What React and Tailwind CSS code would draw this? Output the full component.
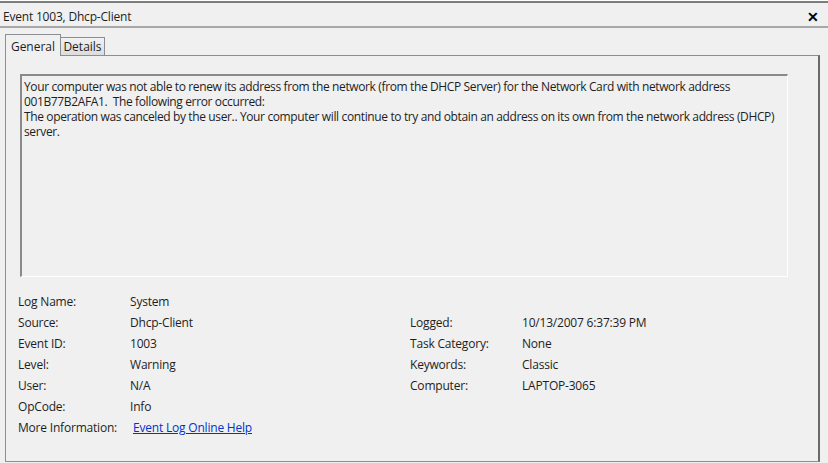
import React from "react";

const left = [
  ["Log Name:", "System"],
  ["Source:", "Dhcp-Client"],
  ["Event ID:", "1003"],
  ["Level:", "Warning"],
  ["User:", "N/A"],
  ["OpCode:", "Info"],
];
const right = [
  null,
  ["Logged:", "10/13/2007 6:37:39 PM"],
  ["Task Category:", "None"],
  ["Keywords:", "Classic"],
  ["Computer:", "LAPTOP-3065"],
  null,
];

export default function App() {
  return (
    <div
      className="w-[828px] h-[463px] overflow-hidden bg-[#f0f0f0] text-[12px] text-[#1e1e1e] flex flex-col"
      style={{ fontFamily: '"Open Sans", "Noto Sans", sans-serif' }}
    >
      <div className="h-[1px] bg-white" />
      <div className="h-[2px] bg-[#7d7d7d]" />
      <div className="h-[25px] flex items-center justify-between pl-[3px] pr-[9px] pt-[4px] border-b-2 border-[#a8a8a8]">
        <span className="tracking-[-0.2px]">Event 1003, Dhcp-Client</span>
        <span className="text-[14px] font-bold text-black leading-none">✕</span>
      </div>
      <div className="flex-1 flex flex-col pl-[5px] pr-[8px] pb-[1px]">
        <div className="h-[27px] flex items-end pt-[6px] relative">
          <div className="relative z-10 h-[22px] w-[56px] border border-b-0 border-[#8c8e94] bg-[#f0f0f0] flex items-center justify-center pt-[2px] mb-[-1px]">
            General
          </div>
          <div className="h-[18px] w-[44px] border border-l-0 border-b-0 border-[#8c8e94] bg-gradient-to-b from-[#f2f2f2] to-[#dcdcdc] flex items-center justify-center pt-[1px]">
            Details
          </div>
        </div>
        <div className="flex-1 border border-[#8c8e94] border-r-2 border-r-[#6a6a6a] px-[14px] pt-[18px]">
          <div className="w-[768px] h-[203px] border-t-2 border-l-2 border-t-[#8a8a8a] border-l-[#8a8a8a] border-b border-r border-b-white border-r-white pl-[2px] pt-[3px] leading-[15px] tracking-[-0.37px]">
            Your computer was not able to renew its address from the network (from the DHCP Server) for the Network Card with network address
            <br />
            001B77B2AFA1.&nbsp; The following error occurred:
            <br />
            The operation was canceled by the user.. Your computer will continue to try and obtain an address on its own from the network address (DHCP)
            <br />
            server.
          </div>
          <div className="mt-[14px] grid grid-cols-[112px_280px_112px_1fr] -ml-[2px]">
            {left.map((l, i) => (
              <React.Fragment key={i}>
                <div className="h-[21px] flex items-center tracking-[-0.2px]">{l[0]}</div>
                <div className="h-[21px] flex items-center tracking-[-0.2px]">{l[1]}</div>
                <div className="h-[21px] flex items-center tracking-[-0.2px]">{right[i] ? right[i][0] : ""}</div>
                <div className="h-[21px] flex items-center tracking-[-0.2px]">{right[i] ? right[i][1] : ""}</div>
              </React.Fragment>
            ))}
            <div className="h-[21px] flex items-center tracking-[-0.2px]">More Information:</div>
            <div className="h-[21px] flex items-center pl-[3px] tracking-[-0.2px]">
              <a className="text-[#0033cc] underline">Event Log Online Help</a>
            </div>
          </div>
        </div>
      </div>
    </div>
  );
}
